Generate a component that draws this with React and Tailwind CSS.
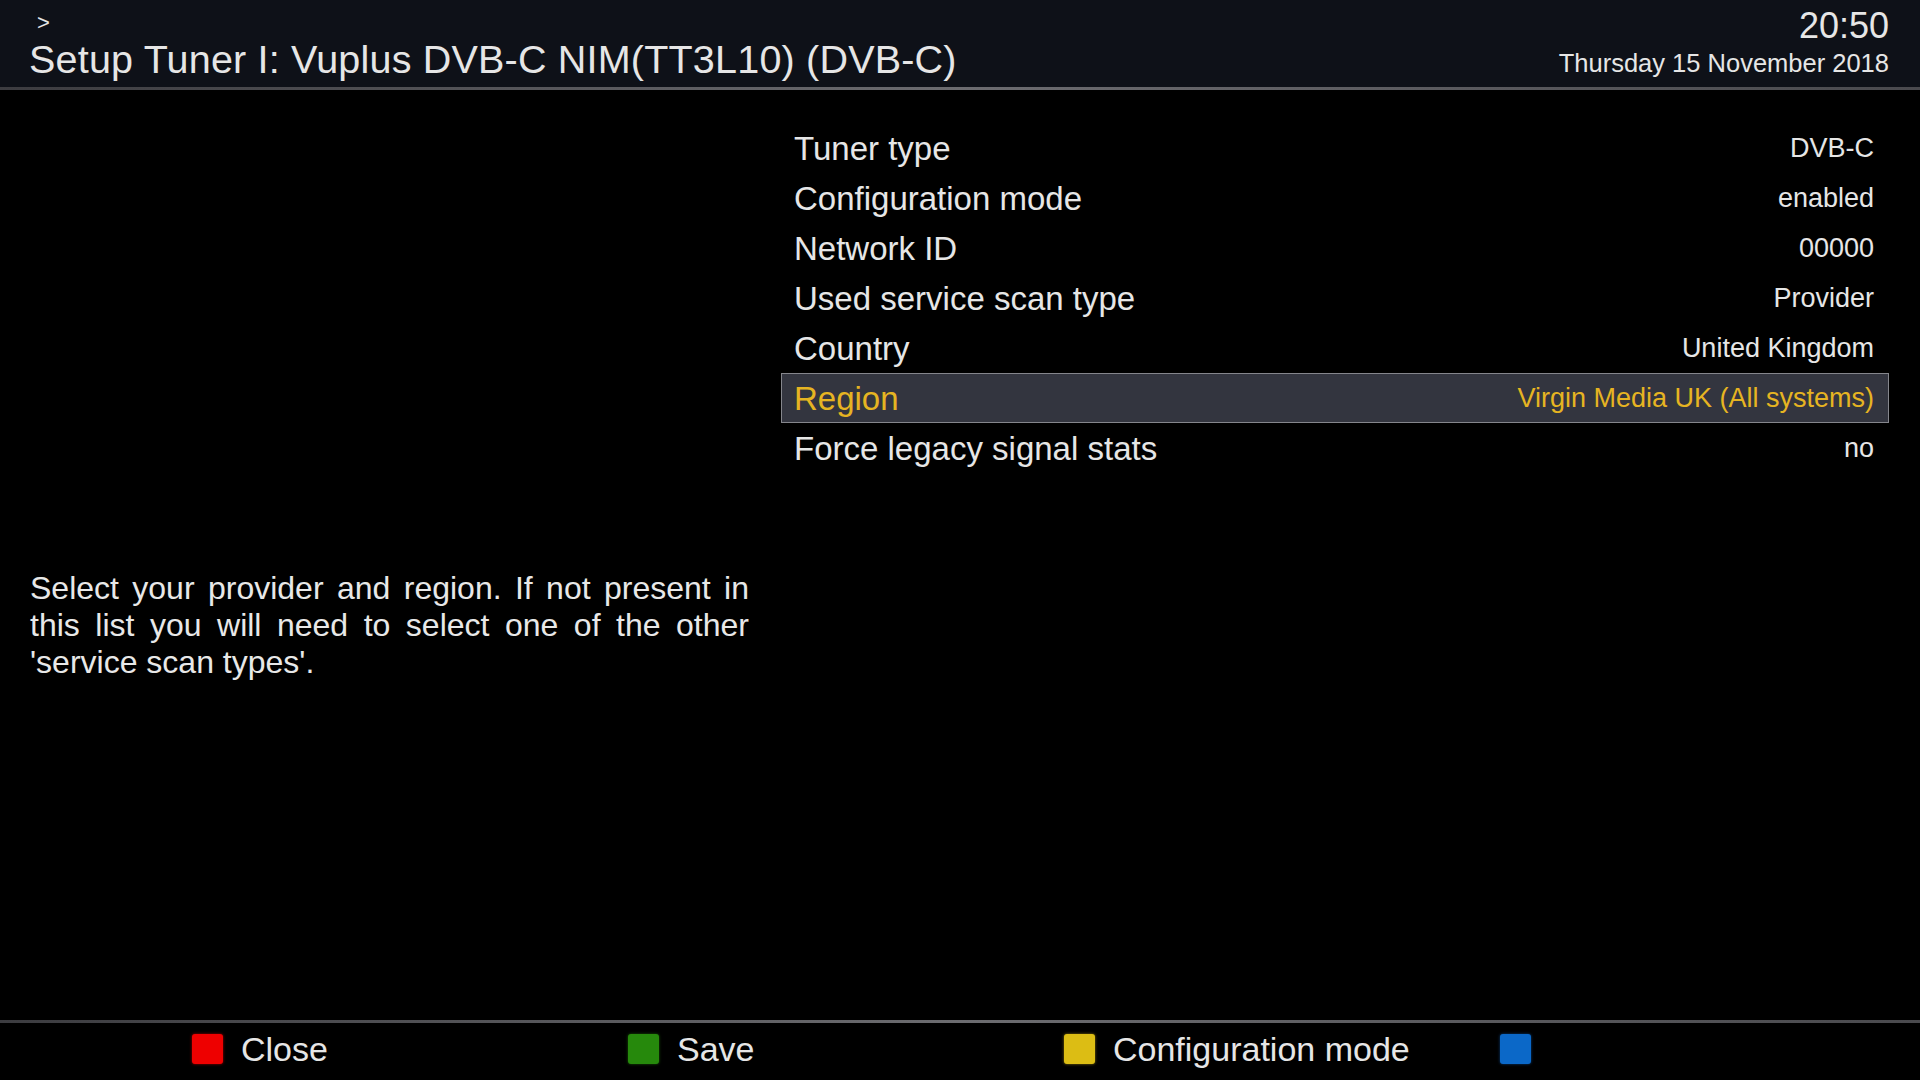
import React from "react";

const rows = [
  { label: "Tuner type", value: "DVB-C" },
  { label: "Configuration mode", value: "enabled" },
  { label: "Network ID", value: "00000" },
  { label: "Used service scan type", value: "Provider" },
  { label: "Country", value: "United Kingdom" },
  { label: "Region", value: "Virgin Media UK (All systems)", selected: true },
  { label: "Force legacy signal stats", value: "no" },
];

const buttons = [
  { color: "bg-[#ee0000] shadow-[0_0_3px_#a00000]", text: "Close" },
  { color: "bg-[#26890c] shadow-[0_0_3px_#1a5a08]", text: "Save" },
  { color: "bg-[#dcbd14] shadow-[0_0_3px_#8a7610]", text: "Configuration mode" },
  { color: "bg-[#0b68c8] shadow-[0_0_3px_#0a3f7a]", text: "" },
];

export default function App() {
  return (
    <div className="flex h-[1080px] w-[1920px] flex-col overflow-hidden bg-black font-['Liberation_Sans',Arial,sans-serif] text-[#e6e6e6]">
      {/* Header */}
      <div className="flex h-[87px] justify-between bg-[#0e1118] pl-[29px] pr-[31px]">
        <div>
          <div className="mt-[12px] pl-[8px] text-[22px] leading-none">&gt;</div>
          <div className="mt-[6px] text-[39.5px] leading-none tracking-[0.2px]">
            Setup Tuner I: Vuplus DVB-C NIM(TT3L10) (DVB-C)
          </div>
        </div>
        <div className="flex flex-col items-end">
          <div className="mt-[8px] text-[36px] leading-none">20:50</div>
          <div className="mt-[7px] text-[25.5px] leading-none">Thursday 15 November 2018</div>
        </div>
      </div>
      <div className="h-[3px] bg-gradient-to-r from-[#3c3c40] via-[#6c6c70] to-[#4a4a4e]" />

      {/* Main */}
      <div className="flex flex-1 gap-[32px] pl-[30px] pr-[31px]">
        <div className="w-[719px] pt-[480px]">
          <p className="text-justify text-[32px] leading-[37px] text-[#e8e8e8]">
            Select your provider and region. If not present in this list you will need to select one of the other 'service scan types'.
          </p>
        </div>
        <div className="flex-1 pt-[33px]">
          {rows.map((row) => (
            <div
              key={row.label}
              className={`flex h-[50px] items-center justify-between pl-[12px] pr-[14px] ${
                row.selected
                  ? "border border-[#85868c] bg-[#33353f] text-[#e6b422]"
                  : "border border-transparent"
              }`}
            >
              <span className="text-[33px] leading-none">{row.label}</span>
              <span className="text-[27px] leading-none">{row.value}</span>
            </div>
          ))}
        </div>
      </div>

      {/* Footer */}
      <div className="h-[3px] bg-gradient-to-r from-[#3c3c40] via-[#6c6c70] to-[#4a4a4e]" />
      <div className="flex h-[57px] pl-[192px] pt-[11px]">
        {buttons.map((b, i) => (
          <div key={i} className="flex h-[30px] w-[436px] shrink-0 items-center gap-[18px]">
            <div className={`h-[30px] w-[31px] shrink-0 rounded-[3px] ${b.color}`} />
            <span className="text-[34px] leading-none">{b.text}</span>
          </div>
        ))}
      </div>
    </div>
  );
}
